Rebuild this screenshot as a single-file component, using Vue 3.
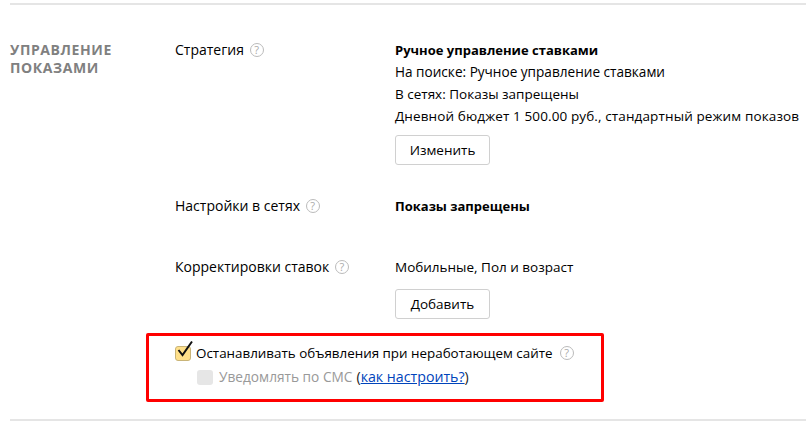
<template>
  <div class="page">
    <section class="section">
      <h2 class="title">Управление показами</h2>
      <div class="rows">
        <div class="row row-strategy">
          <div class="label">Стратегия <span class="hint">?</span></div>
          <div class="value">
            <div class="bold">Ручное управление ставками</div>
            <div class="line line-search">На поиске: Ручное управление ставками</div>
            <div class="line">В сетях: Показы запрещены</div>
            <div class="line line-budget">Дневной бюджет 1 500.00 руб., стандартный режим показов</div>
            <button class="btn">Изменить</button>
          </div>
        </div>
        <div class="row row-nets">
          <div class="label">Настройки в сетях <span class="hint">?</span></div>
          <div class="value"><div class="bold">Показы запрещены</div></div>
        </div>
        <div class="row row-bids">
          <div class="label">Корректировки ставок <span class="hint">?</span></div>
          <div class="value">
            <div class="line">Мобильные, Пол и возраст</div>
            <button class="btn">Добавить</button>
          </div>
        </div>
        <div class="checks">
          <div class="check-row">
            <span class="box box-on">
              <svg class="tick" width="20" height="19" viewBox="0 0 20 19"><path d="M3.5 10 L7.5 15 L17 1.5" fill="none" stroke="#111" stroke-width="2"/></svg>
            </span>
            <span>Останавливать объявления при неработающем сайте</span>
            <span class="hint hint-gap">?</span>
          </div>
          <div class="check-row sub">
            <span class="box box-off"></span>
            <span class="muted">Уведомлять по СМС</span>
            <span class="paren">(<a class="link">как настроить?</a>)</span>
          </div>
        </div>
      </div>
      <div class="redbox"></div>
    </section>
  </div>
</template>

<script setup>
</script>

<style>
html, body { background: #fff; }
</style>

<style scoped>
.page {
  width: 806px;
  height: 421px;
  overflow: hidden;
  padding: 3px 0 0 10px;
  box-sizing: border-box;
  font-family: "Open Sans", "Noto Sans", sans-serif;
  font-size: 14px;
  line-height: 22px;
  color: #000;
}
.section {
  position: relative;
  display: flex;
  height: 418px;
  box-sizing: border-box;
  border-top: 2px solid #e5e5e5;
  border-bottom: 2px solid #e5e5e5;
  padding-top: 34px;
}
.title {
  flex: none;
  width: 165px;
  margin: 2px 0 0;
  font-size: 14px;
  line-height: 18px;
  font-weight: 700;
  letter-spacing: 0.6px;
  text-transform: uppercase;
  color: #808080;
}
.rows { flex: 1; min-width: 0; }
.row { display: flex; }
.label { flex: none; width: 220px; }
.value { font-size: 13.5px; }
.row-strategy { height: 156px; }
.row-nets { height: 61px; }
.row-bids { height: 79px; }
.bold { font-size: 13px; font-weight: 700; }
.line { height: 22px; white-space: nowrap; }
.line-search { font-size: 13.6px; }
.line-budget { letter-spacing: 0.12px; }
.btn {
  display: block;
  margin-top: 8px;
  width: 95px;
  height: 30px;
  padding: 0;
  background: #fff;
  border: 1px solid #d0d0d0;
  border-radius: 3px;
  font-family: inherit;
  font-size: 13.5px;
  color: #000;
}
.row-bids .btn { margin-top: 11px; }
.hint {
  display: inline-block;
  width: 12px;
  height: 12px;
  margin-left: 2px;
  border: 1px solid #bbb;
  border-radius: 50%;
  color: #aaa;
  font-size: 11px;
  line-height: 12px;
  text-align: center;
  vertical-align: 1px;
}
.hint-gap { margin-left: 7px; }
.checks { padding-top: 6px; }
.check-row { display: flex; align-items: center; height: 24px; font-size: 13.4px; }
.box {
  position: relative;
  flex: none;
  width: 16px;
  height: 15px;
  border-radius: 3px;
  margin-right: 5px;
  box-sizing: border-box;
}
.box-on { background: #ffe08a; border: 1px solid #c9b478; }
.box-off { background: #e6e6e6; margin-left: 22px; margin-right: 6px; }
.tick { position: absolute; left: -1px; top: -7px; }
.muted { color: #999; font-size: 13.7px; }
.paren { margin-left: 4px; color: #222; font-size: 14.2px; }
.link { color: #04b; text-decoration: underline; }
.redbox {
  position: absolute;
  left: 136px;
  top: 328px;
  width: 452px;
  height: 63px;
  border: 3px solid #f00;
  border-radius: 2px;
}
</style>
